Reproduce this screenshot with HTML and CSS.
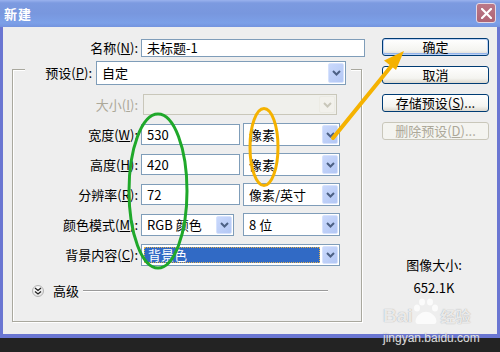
FILE: index.html
```html
<!DOCTYPE html>
<html lang="zh-CN">
<head>
  <meta charset="UTF-8" />
  <title>新建</title>
  <link rel="stylesheet" href="styles.css">
</head>
<body>
  <div class="window">
    <div class="titlebar">
      <span class="title">新建</span>
      <span class="close">
        <svg width="11" height="11" viewBox="0 0 11 11"><path d="M1 1 L10 10 M10 1 L1 10" stroke="#fff" stroke-width="2.2" stroke-linecap="square"/></svg>
      </span>
    </div>

    <div class="content">
      <div class="main">
        <div class="name-row">
          <label class="name-label">名称(<u>N</u>):</label>
          <div class="input name-input">未标题-1</div>
        </div>

        <div class="group">
          <div class="preset-row">
            <label class="preset-label">预设(<u>P</u>):</label>
            <div class="select preset-select">自定<span class="drop"><svg width="9" height="6" viewBox="0 0 9 6"><path d="M1 1 L4.5 4.5 L8 1" fill="none" stroke="#4d6185" stroke-width="2"/></svg></span></div>
          </div>

          <div class="fields">
            <div class="frow">
              <label class="flabel disabled-text">大小(<u>I</u>):</label>
              <div class="select disabled size-select"><span class="drop"><svg width="9" height="6" viewBox="0 0 9 6"><path d="M1 1 L4.5 4.5 L8 1" fill="none" stroke="#c9c7ba" stroke-width="2"/></svg></span></div>
            </div>
            <div class="frow">
              <label class="flabel">宽度(<u>W</u>):</label>
              <div class="input num-input">530</div>
              <div class="select unit-select">像素<span class="drop"><svg width="9" height="6" viewBox="0 0 9 6"><path d="M1 1 L4.5 4.5 L8 1" fill="none" stroke="#4d6185" stroke-width="2"/></svg></span></div>
            </div>
            <div class="frow">
              <label class="flabel">高度(<u>H</u>):</label>
              <div class="input num-input">420</div>
              <div class="select unit-select">像素<span class="drop"><svg width="9" height="6" viewBox="0 0 9 6"><path d="M1 1 L4.5 4.5 L8 1" fill="none" stroke="#4d6185" stroke-width="2"/></svg></span></div>
            </div>
            <div class="frow">
              <label class="flabel">分辨率(<u>R</u>):</label>
              <div class="input num-input">72</div>
              <div class="select unit-select">像素/英寸<span class="drop"><svg width="9" height="6" viewBox="0 0 9 6"><path d="M1 1 L4.5 4.5 L8 1" fill="none" stroke="#4d6185" stroke-width="2"/></svg></span></div>
            </div>
            <div class="frow">
              <label class="flabel">颜色模式(<u>M</u>):</label>
              <div class="select mode-select">RGB 颜色<span class="drop"><svg width="9" height="6" viewBox="0 0 9 6"><path d="M1 1 L4.5 4.5 L8 1" fill="none" stroke="#4d6185" stroke-width="2"/></svg></span></div>
              <div class="select unit-select">8 位<span class="drop"><svg width="9" height="6" viewBox="0 0 9 6"><path d="M1 1 L4.5 4.5 L8 1" fill="none" stroke="#4d6185" stroke-width="2"/></svg></span></div>
            </div>
            <div class="frow">
              <label class="flabel">背景内容(<u>C</u>):</label>
              <div class="select bg-select"><span class="picked">背景色</span><span class="drop"><svg width="9" height="6" viewBox="0 0 9 6"><path d="M1 1 L4.5 4.5 L8 1" fill="none" stroke="#4d6185" stroke-width="2"/></svg></span></div>
            </div>
          </div>

          <div class="adv">
            <span class="adv-btn">
              <svg width="8" height="8" viewBox="0 0 8 8"><path d="M1 1 L4 3.5 L7 1 M1 4.5 L4 7 L7 4.5" fill="none" stroke="#222" stroke-width="1.3"/></svg>
            </span>
            <span class="adv-text">高级</span>
            <div class="adv-line"></div>
          </div>
        </div>
      </div>

      <div class="side">
        <div class="btn default">确定</div>
        <div class="btn">取消</div>
        <div class="btn">存储预设(<u>S</u>)...</div>
        <div class="btn disabled">删除预设(<u>D</u>)...</div>
        <div class="info">
          <p>图像大小:</p>
          <p class="info-value">652.1K</p>
        </div>
      </div>
    </div>
  </div>

  <svg class="marks" width="500" height="352" viewBox="0 0 500 352">
    <ellipse cx="158" cy="191" rx="29" ry="77" fill="none" stroke="#1fa82a" stroke-width="3"/>
    <ellipse cx="264" cy="147" rx="14" ry="38.5" fill="none" stroke="#f5b200" stroke-width="3"/>
    <line x1="333" y1="138" x2="393" y2="64" stroke="#f5b200" stroke-width="4" stroke-linecap="round"/>
    <polygon points="404,51 384,60.5 396,70" fill="#f5b200"/>
  </svg>

  <div class="watermark">
    <div class="wm-logo">
      <span class="wm-bai">Bai</span>
      <svg class="wm-paw" width="30" height="30" viewBox="0 0 30 30">
        <ellipse cx="6" cy="11" rx="3" ry="3.5"/>
        <ellipse cx="11" cy="5" rx="3" ry="3.5"/>
        <ellipse cx="19" cy="5" rx="3" ry="3.5"/>
        <ellipse cx="24" cy="11" rx="3" ry="3.5"/>
        <path d="M7 27 C3 27 4 20 9 17 C12 14 18 14 21 17 C26 20 27 27 23 27 Z"/>
      </svg>
      <span class="wm-jy">经验</span>
    </div>
    <div class="wm-url">jingyan.baidu.com</div>
  </div>
</body>
</html>
```

FILE: styles.css
```css
* {
  margin: 0;
  padding: 0;
  box-sizing: border-box;
}

body {
  width: 500px;
  height: 352px;
  overflow: hidden;
  position: relative;
  background-color: #232323;
  color: #000;
  font-family: "Noto Sans CJK SC", "Noto Sans", sans-serif;
  font-size: 13px;
  line-height: 16px;
}

label {
  white-space: nowrap;
}

.window {
  width: 500px;
  height: 338px;
  background-color: #6a76d2;
  padding: 0 3px 4px;
  display: flex;
  flex-direction: column;
}

.titlebar {
  margin: 0 -3px;
  height: 27px;
  padding: 0 4px;
  display: flex;
  align-items: center;
  justify-content: space-between;
  background: linear-gradient(#9ab2ee 0, #7c9ae0 3px, #7897de 50%, #7ca0e8 85%, #7494de 100%);
}

.title {
  color: #fff;
  font-weight: bold;
  font-size: 13px;
  letter-spacing: 1px;
}

.close {
  width: 20px;
  height: 20px;
  margin-top: -1px;
  border: 1px solid #e4d8e4;
  border-radius: 3px;
  background: linear-gradient(#bb7888, #ae6474);
  display: flex;
  align-items: center;
  justify-content: center;
}

.content {
  flex: 1;
  background-color: #eeeeee;
  display: flex;
  padding-top: 11px;
}

.main {
  width: 370px;
}

.name-row {
  display: flex;
  align-items: center;
  margin-top: 1px;
  height: 18px;
}

.name-label {
  width: 135px;
  margin-right: 3px;
  text-align: right;
}

.input {
  background-color: #fff;
  border: 1px solid #7f9db9;
  padding-left: 5px;
  display: flex;
  align-items: center;
}

.name-input {
  width: 224px;
  height: 18px;
}

.group {
  margin: 12px 0 0 9px;
  width: 350px;
  height: 253px;
  border: 1px solid #a9a89e;
  box-shadow: inset 1px 1px 0 #fff, 1px 1px 0 #fff;
}

.preset-row {
  display: flex;
  align-items: center;
  margin: -9px 0 0 12px;
  width: 326px;
  height: 24px;
  background-color: #eeeeee;
}

.preset-label {
  width: 67px;
  margin-right: 4px;
  text-align: right;
}

.select {
  background-color: #fff;
  border: 1px solid #7f9db9;
  padding-left: 5px;
  display: flex;
  align-items: center;
  justify-content: space-between;
  white-space: nowrap;
}

.drop {
  width: 16px;
  align-self: stretch;
  margin: 1px;
  border: 1px solid #d6e2fd;
  border-radius: 2px;
  background: linear-gradient(135deg, #cad9fc, #b3c7f4);
  display: flex;
  align-items: center;
  justify-content: center;
}

.preset-select {
  width: 250px;
  height: 24px;
}

.fields {
  margin-top: 8px;
}

.frow {
  display: flex;
  align-items: center;
  height: 23px;
  margin-bottom: 7px;
}

.flabel {
  width: 125px;
  margin-right: 3px;
  text-align: right;
}

.disabled-text {
  color: #aca899;
}

.select.disabled {
  background-color: #f0f0ec;
  border-color: #c9c7ba;
}

.select.disabled .drop {
  border-color: #ecebe4;
  background: #f2f1ec;
}

.size-select {
  width: 194px;
  height: 21px;
  margin-left: 2px;
  justify-content: flex-end;
}

.num-input {
  width: 99px;
  height: 21px;
  margin-right: 3px;
}

.unit-select {
  width: 97px;
  height: 23px;
}

.mode-select {
  width: 93px;
  height: 22px;
  margin-right: 9px;
}

.bg-select {
  width: 199px;
  height: 22px;
  padding-left: 2px;
}

.picked {
  width: 176px;
  height: 16px;
  padding-left: 3px;
  background-color: #316ac5;
  color: #fff;
  border: 1px dotted #e0b050;
  display: flex;
  align-items: center;
}

.adv {
  display: flex;
  align-items: center;
  height: 14px;
  margin-top: 18px;
  padding-left: 19px;
}

.adv-btn {
  flex-shrink: 0;
  width: 12px;
  height: 12px;
  border-radius: 50%;
  border: 1px solid #b4b4b4;
  background: radial-gradient(circle at 40% 35%, #fff, #dcdcdc);
  display: flex;
  align-items: center;
  justify-content: center;
}

.adv-text {
  margin-left: 9px;
}

.adv-line {
  flex: 0 0 245px;
  margin-left: 4px;
  height: 2px;
  border-top: 1px solid #9a9a9a;
  border-bottom: 1px solid #ffffff;
}

.side {
  margin-left: 9px;
  width: 107px;
  display: flex;
  flex-direction: column;
}

.btn {
  height: 18px;
  margin-bottom: 10px;
  border: 1px solid #003c74;
  border-radius: 3px;
  background: linear-gradient(#ffffff, #f4f4f0 70%, #dcd8cf);
  display: flex;
  align-items: center;
  justify-content: center;
  white-space: nowrap;
}

.btn.default {
  box-shadow: inset 0 0 0 1px #bcd2f6, inset 0 -1px 0 1px #93b4ea;
}

.btn.disabled {
  border-color: #c9c7ba;
  color: #aca899;
  background: #f4f4f0;
}

.info {
  margin-top: 107px;
  padding-right: 3px;
  text-align: center;
}

.info-value {
  margin-top: 7px;
}

.marks {
  position: absolute;
  left: 0;
  top: 0;
  pointer-events: none;
}

.watermark {
  position: absolute;
  left: 383px;
  top: 297px;
  color: rgba(255, 255, 255, 0.8);
  text-shadow: 0 0 1px rgba(110, 110, 110, 0.7);
  pointer-events: none;
  font-family: "Liberation Sans", sans-serif;
}

.wm-logo {
  display: flex;
  align-items: flex-end;
  height: 30px;
}

.wm-bai {
  font-size: 19px;
  font-weight: bold;
  line-height: 22px;
}

.wm-paw {
  fill: rgba(255, 255, 255, 0.75);
  margin: 0 0 0 -2px;
}

.wm-jy {
  font-family: "Noto Sans CJK SC", sans-serif;
  font-size: 15px;
  font-weight: bold;
  line-height: 22px;
}

.wm-url {
  font-size: 12px;
  line-height: 14px;
  margin-top: 4px;
}
```
